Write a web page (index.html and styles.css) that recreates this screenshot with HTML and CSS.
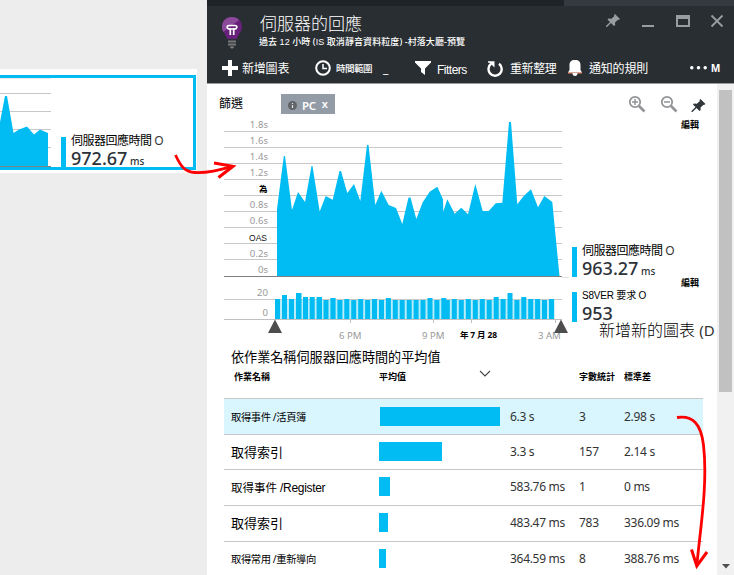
FILE: index.html
```html
<!DOCTYPE html>
<html lang="zh-Hant">
<head>
<meta charset="utf-8">
<title>伺服器的回應</title>
<link rel="stylesheet" href="styles.css">
</head>
<body>
<aside class="board">
  <div class="tile-wrap">
    <div class="tile">
      <svg class="mini" width="61" height="89" viewBox="0 78 61 89">
        <path d="M0 93.5H51M0 111.5H51M0 129.5H51M0 147.5H51" stroke="#c8c8c8"/>
        <path d="M0 78.5H51" stroke="#e6e6e6"/>
        <path d="M0 122L5 96H7L13.5 133L19 129.5L27 126.500L34 134.500L40 129.500L48 133V166H0z" fill="#00bcf2"/>
        <path d="M0 166.500H51" stroke="#808080"/>
      </svg>
      <div class="legend">
        <div class="legend-name">伺服器回應時間 <span>O</span></div>
        <div class="legend-value">972.67 <small>ms</small></div>
      </div>
    </div>
  </div>
</aside>
<main class="blade">
  <header class="head">
    <div class="strip"></div>
    <div class="title-row">
      <svg class="bulb" width="22" height="32" viewBox="0 0 22 32">
        <path d="M11 0C5 0 1 4 1 10c0 5 4 7 5 12h10c1-5 5-7 5-12C21 4 17 0 11 0z" fill="#68217a"/>
        <path d="M11 0C5 0 1 4 1 10c0 2 .5 3.500 1.300 5L18 3C16 1 14 0 11 0z" fill="#8b4a9a"/>
        <path d="M9.300 18V11M12.700 18V11M9.300 12c-4 .5-4-3.500-1.300-3.500h6c2.700 0 2.700 4-1.300 3.500H9.300" fill="none" stroke="#fff" stroke-width="1.700"/>
        <path d="M7 24.500H15M7 27.500H15" stroke="#777" stroke-width="2"/><path d="M8.500 29.500h5l-2 2h-1z" fill="#888"/>
      </svg>
      <div class="titles">
        <h1>伺服器的回應</h1>
        <p>過去 <span>12</span> 小時 (<span>IS</span> 取消靜音資料粒度) -村落大廳-預覽</p>
      </div>
      <svg class="winicons" width="118" height="16" viewBox="606 13 118 16">
        <g transform="translate(606 14)" fill="#9a9da0"><path d="M9 0L14 5L12.500 6L12 5.700L9 8.600L9.200 11L8 12L5 9L1 13L0 13L0 12L4 8L1.500 5.500L2.500 4.500L5.400 4.800L8.400 2L8 1z"/></g>
        <path d="M642 26H654" stroke="#9a9da0" stroke-width="2"/>
        <path d="M676 15H690V27H676zM678 19V25H688V19z" fill="#9a9da0" fill-rule="evenodd"/>
        <path d="M711.500 15.500L722.500 26.500M722.500 15.500L711.500 26.500" stroke="#9a9da0" stroke-width="1.800"/>
      </svg>
    </div>
    <nav class="tools">
      <span class="tool t-add"><svg width="16" height="16" viewBox="0 0 16 16"><path d="M8 0V16M0 8H16" stroke="#fff" stroke-width="4"/></svg><b>新增圖表</b></span>
      <span class="tool t-time"><svg width="16" height="16" viewBox="0 0 16 16"><circle cx="8" cy="8" r="6.800" fill="none" stroke="#fff" stroke-width="2"/><path d="M8 4V8.500H12" fill="none" stroke="#fff" stroke-width="1.500"/></svg><b>時間範圍</b><i>_</i></span>
      <span class="tool t-filter"><svg width="16" height="14" viewBox="0 0 16 14"><path d="M0 0H16V1.500L10 7.500V14L6 11V7.500L0 1.500z" fill="#fff"/></svg><b>Fitters</b></span>
      <span class="tool t-refresh"><svg width="16" height="17" viewBox="0 0 16 17"><path d="M4.500 3.600A6.600 6.600 0 1 0 12 3.800" fill="none" stroke="#fff" stroke-width="2.400"/><path d="M1 1.200H7.500V7.500L5.500 5.500L4 3.500L1 2.500z" fill="#fff"/></svg><b>重新整理</b></span>
      <span class="tool t-bell"><svg width="14" height="16" viewBox="0 0 14 16"><path d="M0 13H14" stroke="#c96542" stroke-width="1.500"/><path d="M7 0C3 0 1.500 2 1.500 5V10L0 12.500H14L12.500 10V5C12.500 2 11 0 7 0zM4.500 13H9.500Q9.500 16 7 16Q4.500 16 4.500 13z" fill="#fff"/></svg><b>通知的規則</b></span>
      <span class="tool t-more"><svg width="17" height="4" viewBox="0 0 17 4"><path d="M1.800 0a1.700 1.700 0 1 0 .01 0zM8.500 0a1.700 1.700 0 1 0 .01 0zM15.200 0a1.700 1.700 0 1 0 .01 0z" fill="#fff"/></svg><b>M</b></span>
    </nav>
  </header>
  <div class="body">
    <div class="content">
      <div class="filters">
        <span class="filter-label">篩選</span>
        <span class="chip"><svg width="9" height="9" viewBox="0 0 9 9"><circle cx="4.500" cy="4.500" r="4.500" fill="#606468"/><path d="M4.500 2V3M4.500 4V7" stroke="#e5e5e5" stroke-width="1.200"/></svg><b>PC</b><i>x</i></span>
        <svg class="zooms" width="78" height="18" viewBox="628 95 78 18">
          <g fill="none" stroke="#929497" stroke-width="1.800"><circle cx="635" cy="102" r="5.200"/><path d="M639 106L644.500 111.500" stroke-width="2.600"/><path d="M632 102H638M635 99V105" stroke-width="1.500"/><circle cx="667" cy="102" r="5.200"/><path d="M671 106L676.500 111.500" stroke-width="2.600"/><path d="M664 102H670" stroke-width="1.500"/></g>
          <path transform="translate(691.500 99)" fill="#31363c" d="M9 0L14 5L12.500 6L12 5.700L9 8.600L9.200 11L8 12L5 9L1 13L0 13L0 12L4 8L1.500 5.500L2.500 4.500L5.400 4.800L8.400 2L8 1z"/>
        </svg>
      </div>
      <div class="metrics">
        <svg class="chart" width="353" height="226" viewBox="219 120 353 226">
          <path d="M224 131.500H562M224 147.500H562M224 163.500H562M224 179.500H562M224 195.500H562M224 211.500H562M224 227.500H562M224 243.500H562M224 259.500H562M224 299.500H562" stroke="#c8c8c8"/>
          <path d="M562 277.500H569" stroke="#e2e2e2"/>
          <path fill="#00bcf2" d="M277 276V209L283.800 156H285L292 210L298 192L305 202L311.500 166H312.500L319.700 211.500L325.700 196L332.700 199.700L339.500 171H341L347.300 193L354 184L360.300 201L367 145H368.500L375.300 205L381.300 190.700L388.700 205L396 208L402.300 224L408.500 197.500H410.500L416.300 219L422.700 202.300L429.700 191.700L437.300 186.700L443 199.300L443.300 211.700L447.300 199.300L454.700 213.700L461.300 207.700L468 214.300L475.300 184L482.700 211H488.700L495.700 203.300L502.300 202.700L509 122H511L517.300 204.300L523.700 196L531 189.300L538 207.300L544.300 196L552.300 202L559.500 276z"/>
          <path d="M224 276.500H562" stroke="#808080"/>
          <path d="M275 300H554.700V319H275z" fill="#b8ecfb"/>
          <path fill="#00bcf2" d="M275 319V299h5V319zM282 319V295h5V319zM289 319V299h5V319zM296 319V293h5.500V319zM303 319V297h5V319zM309.700 319V297h5V319zM316.600 319V297h5.400V319zM323.500 319V300h5V319zM330.400 319V298h5.200V319zM337.400 319V300h5V319zM344.300 319V299h5V319zM351.200 319V300h5V319zM358.200 319V299h5V319zM365.100 319V300h5V319zM372 319V299h5V319zM379 319V300h5V319zM385.900 319V298h5V319zM392.800 319V300h5V319zM399.700 319V300h5V319zM406.700 319V300h5V319zM413.600 319V300h5V319zM420.500 319V300h5V319zM427.500 319V298h5V319zM434.400 319V300h5V319zM441.300 319V298h5V300h3.500V319zM451.800 319V299h5V319zM458.800 319V300h5V319zM465.800 319V299h5V319zM472.800 319V300h5V319zM479.800 319V299h5V319zM486.700 319V300h5V319zM493.700 319V297h5V319zM500.600 319V299h5V319zM507.500 319V293h5V319zM514.400 319V300h5V319zM521.300 319V297h5V319zM528.200 319V299h5V319zM535.100 319V299h5V319zM542 319V300h5V319zM549 319V299h5V319z"/>
          <path d="M224 319.500H562M350.500 319V323M433.500 319V323M471.500 319V323M555.500 319V323" stroke="#c0c0c0"/>
          <g class="axis" text-anchor="end">
            <text x="268" y="128">1.8s</text><text x="268" y="144">1.6s</text><text x="268" y="160">1.4s</text><text x="268" y="176">1.2s</text>
            <text class="dark" x="267.500" y="192">為</text><text x="268" y="208">0.8s</text><text x="268" y="224">0.6s</text>
            <text class="oas" x="267" y="241">OAS</text><text x="268" y="257">0.2s</text><text x="268" y="273">0s</text>
            <text x="268" y="296">20</text><text x="268" y="316">0</text>
          </g>
          <g class="axis">
            <text x="339" y="339">6 PM</text><text x="422" y="339">9 PM</text><text class="dark" x="460" y="338" textLength="37">年 7 月 28</text><text x="538" y="339">3 AM</text>
          </g>
          <path d="M275 319.500L282 333H268zM561 319.500L568 333H554z" fill="#4d4d4d"/>
        </svg>
        <div class="side">
          <div class="edit">編輯</div>
          <div class="legend first">
            <div class="legend-name">伺服器回應時間 <span>O</span></div>
            <div class="legend-value">963.27 <small>ms</small></div>
          </div>
          <div class="edit second">編輯</div>
          <div class="legend last">
            <div class="legend-name requests">S8VER 要求 O</div>
            <div class="legend-value">953</div>
          </div>
          <div class="add-chart">新增新的圖表 <span>(D</span></div>
        </div>
      </div>
      <h2>依作業名稱伺服器回應時間的平均值</h2>
      <div class="row thead"><span class="c1">作業名稱</span><span class="c2">平均值<svg width="12" height="7" viewBox="0 0 12 7"><path d="M1 1L6 6L11 1" fill="none" stroke="#444" stroke-width="1.100"/></svg></span><span></span><span>字數統計</span><span>標準差</span></div>
      <div class="row sel"><span class="n11">取得事件 /活頁簿</span><span class="bar w1"></span><span>6.3 s</span><span>3</span><span>2.98 s</span></div>
      <div class="row short"><span class="n13">取得索引</span><span class="bar w2"></span><span>3.3 s</span><span>157</span><span>2.14 s</span></div>
      <div class="row"><span class="n12">取得事件 <em>/Register</em></span><span class="bar w3"></span><span>583.76 ms</span><span>1</span><span>0 ms</span></div>
      <div class="row"><span class="n13">取得索引</span><span class="bar w4"></span><span>483.47 ms</span><span>783</span><span>336.09 ms</span></div>
      <div class="row"><span class="n11">取得常用 /重新導向</span><span class="bar w5"></span><span>364.59 ms</span><span>8</span><span>388.76 ms</span></div>
    </div>
    <div class="scroll"><div class="thumb"></div><svg width="8" height="5" viewBox="0 0 8 5"><path d="M0 0H8L4 4.500z" fill="#505050"/></svg></div>
  </div>
</main>
<svg class="arrows" width="734" height="575" viewBox="0 0 734 575">
  <g fill="none" stroke="#ff0000" stroke-width="2.800">
    <path d="M175.500 155C181 167 185 172 195 172.500C208 173 219 170 232 166.500"/>
    <path d="M677 417.500C693 415 701 424 703.500 445C708 485 700 530 697 564"/>
  </g>
  <path d="M214 163L233 166.300L218.500 177.500M691.500 549.500L696.800 566L707 552" fill="none" stroke="#ff0000" stroke-width="3"/>
</svg>
</body>
</html>
```
FILE: styles.css
```css
* { box-sizing: border-box; }
body { margin: 0; width: 734px; height: 575px; overflow: hidden; position: relative; display: flex; background: #ededed; color: #000; font-family: "Noto Sans", "Noto Sans CJK TC", sans-serif; white-space: nowrap; }
svg { display: block; flex: none; }
i, em { font-style: normal; }
b { font-weight: 400; }
.board { width: 207px; flex: none; padding-top: 69px; }
.tile-wrap { width: 197px; height: 104px; padding: 6px 1px 3px 0; background: #fff; }
.tile { display: flex; height: 95px; border: 3px solid #00bcf2; border-left: 0; background: #fff; }
.legend { height: 30px; border-left: 5px solid #00bcf2; padding-left: 5px; }
.tile .legend { margin-top: 59px; }
.legend-name { height: 12px; line-height: 8px; font-size: 12px; letter-spacing: -0.5px; }
.legend-name span { color: #333; }
.legend-value { height: 18px; line-height: 19px; font-size: 18px; font-weight: 500; color: #2c3238; }
.legend-value small { font-size: 10px; font-weight: 500; margin-left: -2px; }
.requests { font-family: "Liberation Sans", "Noto Sans CJK TC", sans-serif; font-size: 10px; letter-spacing: -0.2px; }

.blade { width: 527px; flex: none; display: flex; flex-direction: column; background: #fff; }
.head { height: 84px; flex: none; background: #292e32; border-bottom: 1px solid #9a9a9a; color: #fff; }
.strip { height: 6px; background: linear-gradient(to right, #1f2327 357px, #343a3f 357px); }
.title-row { display: flex; height: 48px; padding: 7px 10px 0 14px; }
.bulb { margin-top: 4px; }
.titles { margin-left: 16px; flex: 1; }
h1 { margin: 0; padding-left: 1px; height: 22px; line-height: 22px; font-size: 17px; font-weight: 300; }
.titles p { margin: 0; height: 14px; line-height: 14px; font-size: 9px; font-weight: 500; letter-spacing: 0.08px; }
.titles p span { font-family: "Liberation Sans"; }
.tools { display: flex; height: 29px; padding-left: 15px; }
.tool { display: flex; align-items: center; height: 28px; font-size: 12px; }
.tool b { margin-top: -1px; }
.t-add { width: 93px; gap: 4px; }
.t-add b { letter-spacing: -0.2px; }
.t-time { width: 100px; gap: 5px; }
.t-time b { font-size: 9.500px; font-weight: 500; letter-spacing: -0.5px; }
.t-time i { margin-left: 6px; }
.t-filter { width: 72px; gap: 6px; font-family: "Liberation Sans"; }
.t-filter b { padding-top: 5px; letter-spacing: -0.5px; }
.t-refresh { width: 81px; gap: 7px; }
.t-refresh b { letter-spacing: -0.4px; }
.t-bell { width: 122px; gap: 7px; }
.t-bell b { letter-spacing: -0.2px; }
.t-more { gap: 4px; }
.t-more b { font: bold 11px "Liberation Sans"; }

.body { flex: 1; display: flex; height: 491px; }
.content { width: 510px; flex: none; padding-left: 12px; }
.filters { display: flex; height: 36px; padding-top: 10px; }
.filter-label { width: 62px; font-size: 12px; line-height: 19px; }
.chip { display: flex; align-items: center; width: 54px; height: 20px; padding: 2px 0 0 7px; background: #929ba6; color: #fff; font-size: 12px; font-weight: 500; }
.chip b { margin-left: 5px; font-weight: 600; font-size: 11.500px; letter-spacing: -0.3px; }
.chip i { margin: -3px 0 0 6px; font-size: 11px; font-weight: 600; }
.zooms { margin: 1px 0 0 293px; }
.metrics { display: flex; height: 226px; }
.chart { overflow: visible; }
.axis { font-size: 9.600px; fill: #999; }
.axis .dark { font-size: 8.500px; font-weight: 700; fill: #000; }
.axis .oas { font-family: "Liberation Sans"; font-size: 8.500px; fill: #111; }
.side { width: 145px; display: flex; flex-direction: column; }
.edit { height: 10px; line-height: 9px; font-size: 9px; font-weight: 700; text-align: right; padding-right: 18px; }
.first { margin-top: 117px; }
.second { margin-top: 1px; }
.last { margin-top: 4px; }
.add-chart { margin-top: -3px; padding-left: 27px; height: 22px; line-height: 22px; font-size: 16px; font-weight: 300; }
.add-chart span { font-weight: 400; color: #333; font-size: 15px; }
h2 { margin: 0; padding-left: 12px; height: 22px; line-height: 22px; font-size: 13.100px; font-weight: 400; }
.row { display: grid; grid-template-columns: 148px 131px 69px 45px 1fr; align-items: center; width: 479px; height: 36px; margin-left: 5px; padding-left: 7px; border-bottom: 1px solid #c8c8c8; font-size: 12px; letter-spacing: -0.3px; color: #333; }
.row span { position: relative; }
.thead { height: 31px; padding-bottom: 13px; font-size: 9px; letter-spacing: 0; font-weight: 700; color: #000; }
.c1 { padding-left: 3px; }
.c2 { display: flex; align-items: center; }
.c2 svg { margin: -6px 0 0 73px; }
.sel { background: #d9f5fe; }
.short { height: 35px; }
.row:not(.thead):not(.sel) { padding-bottom: 2px; }
.row .n11, .row .n12, .row .n13 { color: #000; }
.n11 { font-size: 10.300px; letter-spacing: -0.4px; }
.n12 { font-size: 11.500px; letter-spacing: 0; }
.n12 em { font-family: "Liberation Sans"; font-size: 12px; letter-spacing: -0.3px; }
.n13 { font-size: 13px; letter-spacing: 0; }
.bar { height: 19px; background: #00bcf2; }
.w1 { width: 120px; margin-left: 1px; }
.w2 { width: 63px; }
.w3 { width: 11px; }
.w4 { width: 9px; }
.w5 { width: 7px; }
.scroll { width: 17px; flex: none; padding-top: 6px; background: #f1f1f1; display: flex; flex-direction: column; justify-content: space-between; align-items: center; padding-bottom: 6px; }
.thumb { width: 13px; height: 302px; background: #c1c1c1; }
.arrows { position: absolute; left: 0; top: 0; }
```
